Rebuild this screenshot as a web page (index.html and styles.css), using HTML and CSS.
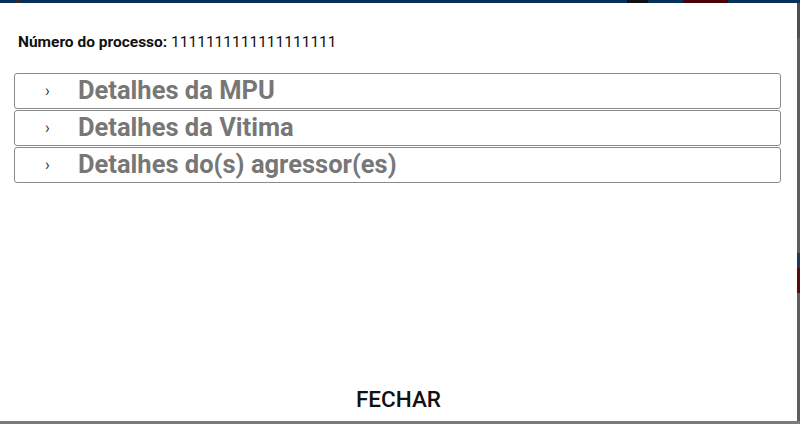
FILE: index.html
```html
<!DOCTYPE html>
<html lang="pt">
<head>
<meta charset="utf-8">
<title>Processo</title>
<link rel="stylesheet" href="styles.css">
</head>
<body>
<div class="page">
  <div class="topbar"></div>
  <div class="middle">
    <div class="modal">
      <div class="modal-body">
        <p class="proc"><strong>Número do processo:</strong> 1111111111111111111</p>
        <div class="accordion">
          <div class="acc-item"><span class="chev">›</span><span class="acc-title">Detalhes da MPU</span></div>
          <div class="acc-item"><span class="chev">›</span><span class="acc-title">Detalhes da Vitima</span></div>
          <div class="acc-item"><span class="chev">›</span><span class="acc-title">Detalhes do(s) agressor(es)</span></div>
        </div>
      </div>
      <div class="modal-footer">
        <button class="btn-close">FECHAR</button>
      </div>
    </div>
    <div class="side"></div>
  </div>
  <div class="bottombar"></div>
</div>
</body>
</html>
```

FILE: styles.css
```css
* { box-sizing: border-box; }
html, body { margin: 0; padding: 0; }
body {
  font-family: Roboto, "Noto Sans", sans-serif;
  background: #5a5a5a;
  width: 800px;
  height: 424px;
  overflow: hidden;
}
.page { display: flex; flex-direction: column; height: 424px; }
.topbar {
  height: 3px;
  background: linear-gradient(to right, #062f5a 0, #062f5a 16px, #3a2a1a 16px, #3a2a1a 19px, #062f5a 19px, #062f5a 627px, #111 627px, #111 648px, #062f5a 648px, #062f5a 683px, #4a0205 683px, #4a0205 728px, #062f5a 728px);
}
.middle { display: flex; height: 418px; }
.modal {
  width: 797px;
  height: 418px;
  background: #fff;
  display: flex;
  flex-direction: column;
}
.side {
  flex: 1;
  background: linear-gradient(to bottom, #4f4f4f 0, #4f4f4f 35px, #5e5e5e 35px, #5e5e5e 250px, #1b3a5c 250px, #1b3a5c 265px, #5a0a0a 265px, #5a0a0a 290px, #5e5e5e 290px);
}
.bottombar { height: 3px; background: #7a7a7a; }
.modal-body { flex: 1; padding: 30px 16px 0 14px; }
.proc {
  margin: 0 0 22px 4px;
  font-size: 15.5px;
  line-height: 18px;
  color: #111;
}
.proc strong { font-weight: 700; }
.accordion { display: flex; flex-direction: column; gap: 1px; }
.acc-item {
  height: 36px;
  border: 1px solid #8a8a8a;
  border-radius: 3px;
  display: flex;
  align-items: center;
  padding-left: 30px;
}
.chev {
  width: 33px;
  font-size: 16px;
  color: #333;
  line-height: 1;
}
.acc-title {
  font-size: 25.5px;
  font-weight: 700;
  color: #777;
  line-height: 1;
}
.modal-footer {
  display: flex;
  justify-content: center;
  padding-bottom: 3px;
}
.btn-close {
  background: none;
  border: 0;
  font-family: Roboto, sans-serif;
  font-size: 22.5px;
  font-weight: 500;
  color: #111;
  padding: 6px 8px;
  line-height: 26px;
}
```
